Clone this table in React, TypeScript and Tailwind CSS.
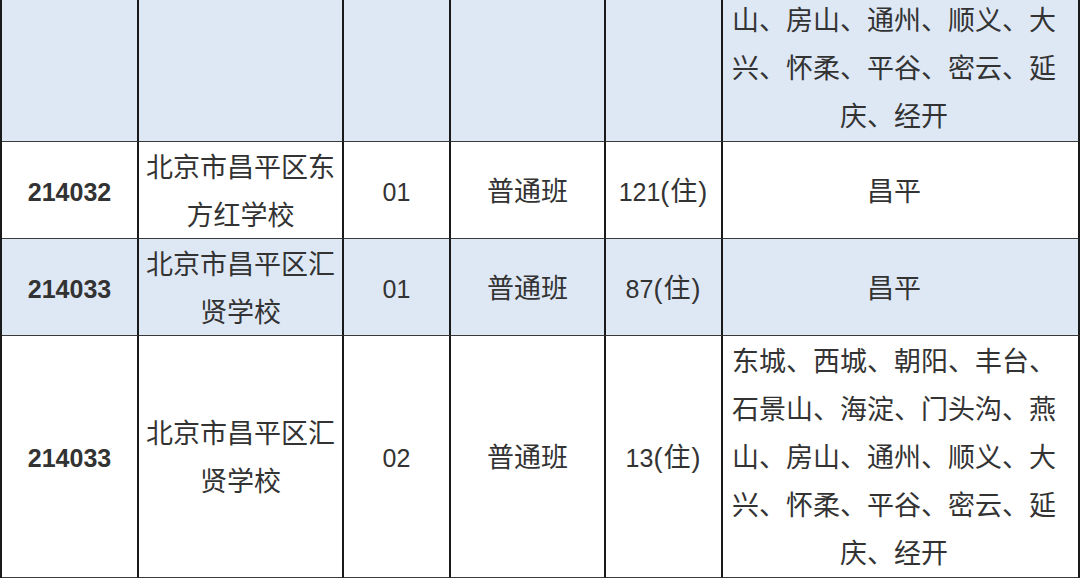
const FONT = { fontFamily: '"Liberation Sans", "Noto Sans CJK SC", sans-serif' };

type Row = {
  code: string;
  school: string;
  num: string;
  kind: string;
  quota: string;
  areas: string[];
  h: string;
  blue: boolean;
  cut?: boolean;
};

const longAreas = [
  "东城、西城、朝阳、丰台、",
  "石景山、海淀、门头沟、燕",
  "山、房山、通州、顺义、大",
  "兴、怀柔、平谷、密云、延",
  "庆、经开",
];

// first row continues from above the picture, only its last lines show
const rows: Row[] = [
  { code: "", school: "", num: "", kind: "", quota: "", areas: longAreas.slice(2), h: "h-[142px]", blue: true, cut: true },
  { code: "214032", school: "北京市昌平区东方红学校", num: "01", kind: "普通班", quota: "121(住)", areas: ["昌平"], h: "h-[97px]", blue: false },
  { code: "214033", school: "北京市昌平区汇贤学校", num: "01", kind: "普通班", quota: "87(住)", areas: ["昌平"], h: "h-[97px]", blue: true },
  { code: "214033", school: "北京市昌平区汇贤学校", num: "02", kind: "普通班", quota: "13(住)", areas: longAreas, h: "h-[242px]", blue: false },
];

function Cell({ children, className = "" }: { children?: React.ReactNode; className?: string }) {
  return (
    <div className={`flex justify-center border-r-2 border-b-[1.5px] border-r-[#1a1a1a] border-b-[#3a3a3a] text-center ${className}`}>
      {children}
    </div>
  );
}

export default function App() {
  return (
    <div className="w-[1080px] h-[579px] overflow-hidden bg-white text-[#333] text-[27px] leading-[48px]" style={FONT}>
      <div className="grid grid-cols-[137px_205px_107px_155px_117px_357px] border-l-2 border-l-[#1a1a1a]">
        {rows.map((r, i) => {
          const bg = r.blue ? "bg-[#dee8f5]" : "bg-white";
          const al = r.cut ? "items-end" : "items-center pt-[3px]";
          return (
            <div key={i} className="contents">
              <Cell className={`${r.h} ${bg} ${al} font-bold text-[25px]`}>{r.code}</Cell>
              <Cell className={`${r.h} ${bg} ${al} px-[6px]`}>{r.school}</Cell>
              <Cell className={`${r.h} ${bg} ${al} text-[25px]`}>{r.num}</Cell>
              <Cell className={`${r.h} ${bg} ${al}`}>{r.kind}</Cell>
              <Cell className={`${r.h} ${bg} ${al} text-[25px]`}>
                <span>
                  {r.quota.replace(/\(.*$/, "")}
                  {r.quota && <span className="text-[27px] tracking-[1px]">{r.quota.replace(/^[0-9]+/, "")}</span>}
                </span>
              </Cell>
              <Cell className={`${r.h} ${bg} ${al} justify-start pl-[8px]`}>
                <div className="w-[326px]">
                  {r.areas.map((a) => (
                    <div key={a} className="whitespace-nowrap text-center">{a}</div>
                  ))}
                </div>
              </Cell>
            </div>
          );
        })}
      </div>
    </div>
  );
}
